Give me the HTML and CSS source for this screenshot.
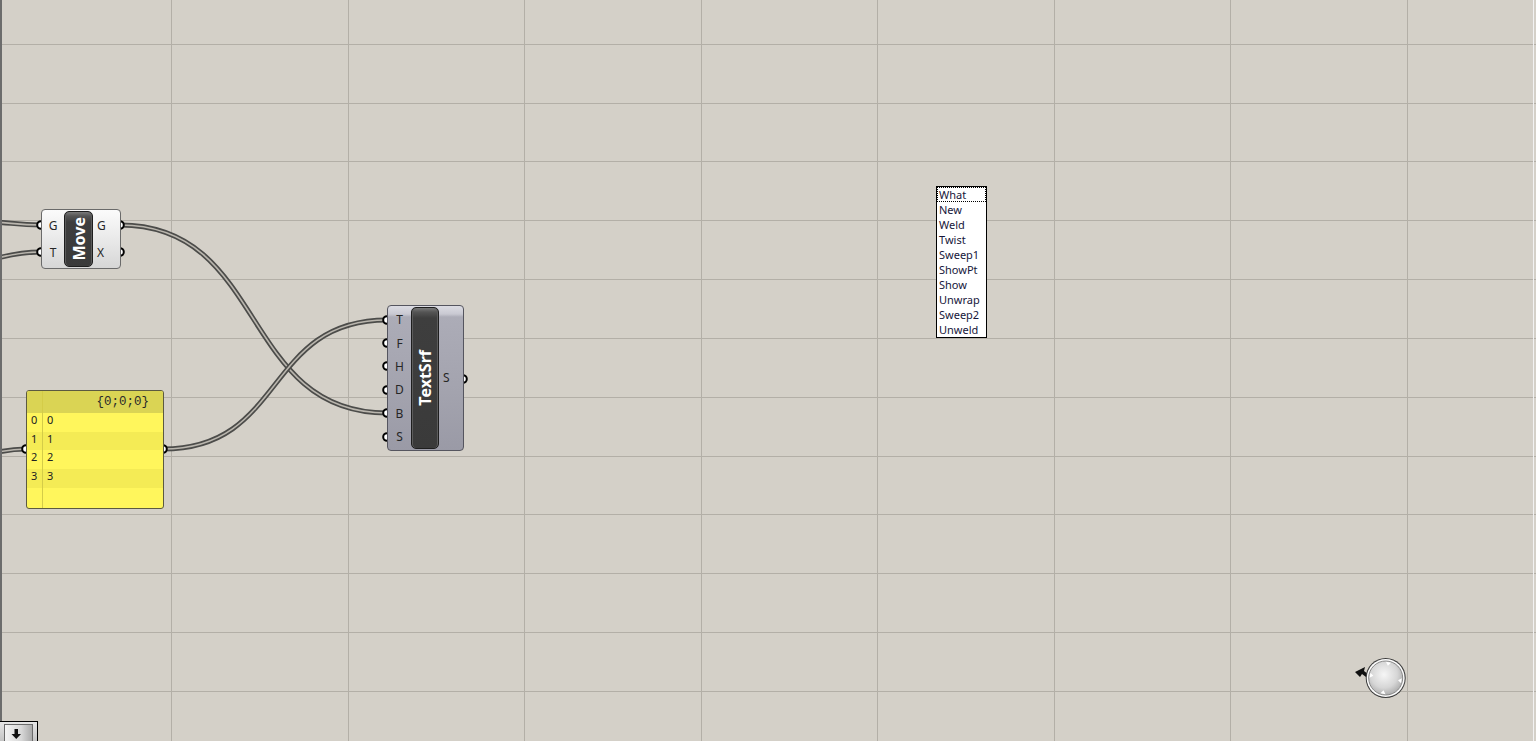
FILE: index.html
```html
<!DOCTYPE html>
<html lang="en">
<head>
<meta charset="utf-8">
<title>Grasshopper canvas</title>
<link rel="stylesheet" href="styles.css">
</head>
<body>
<div class="canvas">
  <svg class="layer" width="1536" height="741" viewBox="0 0 1536 741">
    <g class="grid">
      <line x1="171.5" y1="0" x2="171.5" y2="741"/>
      <line x1="348.5" y1="0" x2="348.5" y2="741"/>
      <line x1="524.5" y1="0" x2="524.5" y2="741"/>
      <line x1="701.5" y1="0" x2="701.5" y2="741"/>
      <line x1="877.5" y1="0" x2="877.5" y2="741"/>
      <line x1="1054.5" y1="0" x2="1054.5" y2="741"/>
      <line x1="1230.5" y1="0" x2="1230.5" y2="741"/>
      <line x1="1407.5" y1="0" x2="1407.5" y2="741"/>
      <line x1="0" y1="44.5" x2="1536" y2="44.5"/>
      <line x1="0" y1="103.5" x2="1536" y2="103.5"/>
      <line x1="0" y1="161.5" x2="1536" y2="161.5"/>
      <line x1="0" y1="220.5" x2="1536" y2="220.5"/>
      <line x1="0" y1="279.5" x2="1536" y2="279.5"/>
      <line x1="0" y1="338.5" x2="1536" y2="338.5"/>
      <line x1="0" y1="397.5" x2="1536" y2="397.5"/>
      <line x1="0" y1="456.5" x2="1536" y2="456.5"/>
      <line x1="0" y1="514.5" x2="1536" y2="514.5"/>
      <line x1="0" y1="573.5" x2="1536" y2="573.5"/>
      <line x1="0" y1="632.5" x2="1536" y2="632.5"/>
      <line x1="0" y1="691.5" x2="1536" y2="691.5"/>
    </g>
    <g class="wire">
      <path class="w-out" d="M120,225 C267,225 240,413 387,413"/>
      <path class="w-in" d="M120,225 C267,225 240,413 387,413"/>
      <path class="w-out" d="M163,449 C286,449 264,320 387,320"/>
      <path class="w-in" d="M163,449 C286,449 264,320 387,320"/>
      <path class="w-out" d="M-40,221 C10,221 10,225 41,225"/>
      <path class="w-in" d="M-40,221 C10,221 10,225 41,225"/>
      <path class="w-out" d="M-60,264 C0,264 0,252 41,252"/>
      <path class="w-in" d="M-60,264 C0,264 0,252 41,252"/>
      <path class="w-out" d="M-40,455 C0,455 0,449 26,449"/>
      <path class="w-in" d="M-40,455 C0,455 0,449 26,449"/>
    </g>
    <g class="port">
      <circle cx="41" cy="225" r="3.8"/>
      <circle cx="41" cy="252" r="3.8"/>
      <circle cx="120" cy="225" r="3.8"/>
      <circle cx="120" cy="252" r="3.8"/>
      <circle cx="26" cy="449" r="3.8"/>
      <circle cx="163" cy="449" r="3.8"/>
      <circle cx="387" cy="320" r="3.8"/>
      <circle cx="387" cy="343" r="3.8"/>
      <circle cx="387" cy="366" r="3.8"/>
      <circle cx="387" cy="390" r="3.8"/>
      <circle cx="387" cy="413" r="3.8"/>
      <circle cx="387" cy="437" r="3.8"/>
      <circle cx="463" cy="379" r="3.8"/>
    </g>
    <rect x="0" y="0" width="2" height="741" fill="#6c6c6c"/>
    <rect x="1533" y="0" width="1" height="741" fill="#f2f2f2"/>
  </svg>

  <div class="node move">
    <div class="ports ins"><span>G</span><span>T</span></div>
    <div class="cap"><span>Move</span></div>
    <div class="ports outs"><span>G</span><span>X</span></div>
  </div>

  <div class="panel">
    <div class="prow head"><span class="idx"></span><span class="path">{0;0;0}</span></div>
    <div class="prow"><span class="idx">0</span><span class="val">0</span></div>
    <div class="prow alt"><span class="idx">1</span><span class="val">1</span></div>
    <div class="prow"><span class="idx">2</span><span class="val">2</span></div>
    <div class="prow alt"><span class="idx">3</span><span class="val">3</span></div>
    <div class="prow last"><span class="idx"></span><span class="val"></span></div>
  </div>

  <div class="node textsrf">
    <div class="ports ins six"><span>T</span><span>F</span><span>H</span><span>D</span><span>B</span><span>S</span></div>
    <div class="cap"><span>TextSrf</span></div>
    <div class="ports outs one"><span>S</span></div>
  </div>

  <ul class="dropdown">
    <li class="focus">What</li>
    <li>New</li>
    <li>Weld</li>
    <li>Twist</li>
    <li>Sweep1</li>
    <li>ShowPt</li>
    <li>Show</li>
    <li>Unwrap</li>
    <li>Sweep2</li>
    <li>Unweld</li>
  </ul>

  <svg class="compass" width="60" height="48" viewBox="0 0 60 48">
    <defs>
      <radialGradient id="cg" cx="0.45" cy="0.4" r="0.65">
        <stop offset="0" stop-color="#f6f6f6"/>
        <stop offset="0.6" stop-color="#d6d6d6"/>
        <stop offset="1" stop-color="#a6a6a6"/>
      </radialGradient>
    </defs>
    <polygon points="5,17 15,12 14,16 18,19 16,22 12,19 10,22" fill="#111"/>
    <circle cx="35.7" cy="23" r="20" fill="#3c3c3c"/>
    <circle cx="35.7" cy="23" r="19" fill="#fbfbfb"/>
    <circle cx="35.7" cy="23" r="17" fill="url(#cg)" stroke="#8a8a8a" stroke-width="1"/>
    <g transform="translate(35.7 23) rotate(10)" fill="#fff">
      <polygon points="-2.6,-16 2.6,-16 0,-12.5"/>
      <polygon points="-2.6,-16 2.6,-16 0,-12.5" transform="rotate(90)"/>
      <polygon points="-2.6,-16 2.6,-16 0,-12.5" transform="rotate(180)"/>
      <polygon points="-2.6,-16 2.6,-16 0,-12.5" transform="rotate(270)"/>
    </g>
  </svg>

  <div class="zoom-btn">
    <svg width="37" height="20" viewBox="0 0 37 20">
      <defs>
        <linearGradient id="bg1" x1="0" y1="0" x2="1" y2="0">
          <stop offset="0" stop-color="#f4f4f4"/>
          <stop offset="0.6" stop-color="#d8d8d8"/>
          <stop offset="1" stop-color="#a8a8a8"/>
        </linearGradient>
      </defs>
      <rect x="4.5" y="3.5" width="28" height="20" fill="url(#bg1)" stroke="#6a6a6a"/>
      <rect x="14.5" y="8" width="3.5" height="5" fill="#111"/>
      <polygon points="11.5,13 21,13 16.25,18" fill="#111"/>
    </svg>
  </div>
</div>
</body>
</html>
```

FILE: styles.css
```css
html, body {
  margin: 0;
  padding: 0;
  background: #d4d0c8;
  overflow: hidden;
}

.canvas {
  position: relative;
  width: 1536px;
  height: 741px;
  overflow: hidden;
  background: #d4d0c8;
  font-family: "Noto Sans", "Open Sans", sans-serif;
}

.layer {
  position: absolute;
  left: 0;
  top: 0;
}

.grid line {
  stroke: #b3afa7;
  stroke-width: 1;
}

.wire path {
  fill: none;
}

.wire .w-out {
  stroke: #4c4c4a;
  stroke-width: 5;
}

.wire .w-in {
  stroke: #bab6ae;
  stroke-width: 1.6;
}

.port circle {
  fill: #ffffff;
  stroke: #000000;
  stroke-width: 2;
}

/* components */
.node {
  position: absolute;
  box-sizing: border-box;
  display: flex;
  border-radius: 4px;
}

.move {
  left: 41px;
  top: 209px;
  width: 80px;
  height: 60px;
  border: 1px solid #6a6a6a;
  background: linear-gradient(#fbfbfb, #e6e6e6 60%, #d6d6d6);
}

.textsrf {
  left: 387px;
  top: 305px;
  width: 77px;
  height: 146px;
  border: 1px solid #55555f;
  background: linear-gradient(#dcdce3 0, #c9c9d2 8px, #acacb7 11px, #a3a3ae 60%, #9a9aa6 100%);
}

.ports {
  display: flex;
  flex-direction: column;
  padding: 2px 0;
  font-size: 12px;
  color: #262626;
}

.ports span {
  flex: 1;
  display: flex;
  align-items: center;
  justify-content: center;
}

.move .ins {
  width: 22px;
}

.move .outs {
  flex: 1;
}

.move .outs span {
  justify-content: flex-start;
  padding-left: 4px;
}

.textsrf .ins {
  width: 23px;
  padding-top: 2px;
  padding-bottom: 0;
}

.textsrf .ins span {
  flex: 0 0 23.4px;
}

.textsrf .outs {
  flex: 1;
}

.textsrf .outs span {
  justify-content: flex-start;
  padding-left: 4px;
  padding-bottom: 2px;
}

.cap {
  box-sizing: border-box;
  display: flex;
  align-items: center;
  justify-content: center;
  background: linear-gradient(#7a7a7a 0, #555555 4px, #3e3e3e 10px, #3a3a3a 100%);
  border: 1px solid #1e1e1e;
  border-radius: 5px;
  box-shadow: inset 1px 0 0 #5c5c5c, inset -1px 0 0 #5c5c5c;
}

.move .cap {
  width: 29px;
  margin: 1px 0;
}

.textsrf .cap {
  width: 28px;
  margin: 1px 0;
}

.cap span {
  writing-mode: vertical-rl;
  transform: rotate(180deg);
  color: #ffffff;
  font-weight: 700;
  font-size: 16px;
  line-height: 1;
}

/* panel */
.panel {
  position: absolute;
  left: 26px;
  top: 390px;
  width: 138px;
  height: 119px;
  box-sizing: border-box;
  border: 1px solid #5c5a40;
  border-radius: 3px;
  overflow: hidden;
  background: #fff65c;
  display: flex;
  flex-direction: column;
}

.prow {
  display: flex;
  height: 18.7px;
  font-size: 11px;
  color: #222;
  line-height: 13px;
}

.prow.alt {
  background: #f4eb55;
}

.prow.head {
  height: 22px;
  background: #dad454;
  align-items: center;
}

.prow.last {
  flex: 1;
}

.idx {
  box-sizing: border-box;
  width: 16px;
  flex: 0 0 16px;
  padding-left: 4px;
  border-right: 1px solid #d4cc48;
  align-self: stretch;
}

.val {
  padding-left: 4px;
}

.path {
  flex: 1;
  text-align: right;
  padding-right: 14px;
  font-family: "Liberation Mono", monospace;
  font-size: 12.5px;
  color: #2a2a2a;
}

/* dropdown */
.dropdown {
  position: absolute;
  left: 936px;
  top: 186px;
  width: 51px;
  box-sizing: border-box;
  margin: 0;
  padding: 0;
  list-style: none;
  background: #ffffff;
  border: 1px solid #000000;
  font-size: 11px;
  color: #16163a;
}

.dropdown li {
  box-sizing: border-box;
  height: 15px;
  line-height: 15px;
  padding-left: 2px;
}

.dropdown li.focus {
  border: 1px dotted #000;
  line-height: 13px;
  padding-left: 1px;
}

/* overlays */
.compass {
  position: absolute;
  left: 1350px;
  top: 655px;
}

.zoom-btn {
  position: absolute;
  left: 0;
  top: 721px;
  width: 38px;
  height: 20px;
  box-sizing: border-box;
  border-top: 1px solid #000;
  border-right: 1px solid #000;
  background: linear-gradient(#e6e6e6, #c4c4c4);
  overflow: hidden;
}

.zoom-btn svg {
  display: block;
  margin-top: -1px;
}
```
